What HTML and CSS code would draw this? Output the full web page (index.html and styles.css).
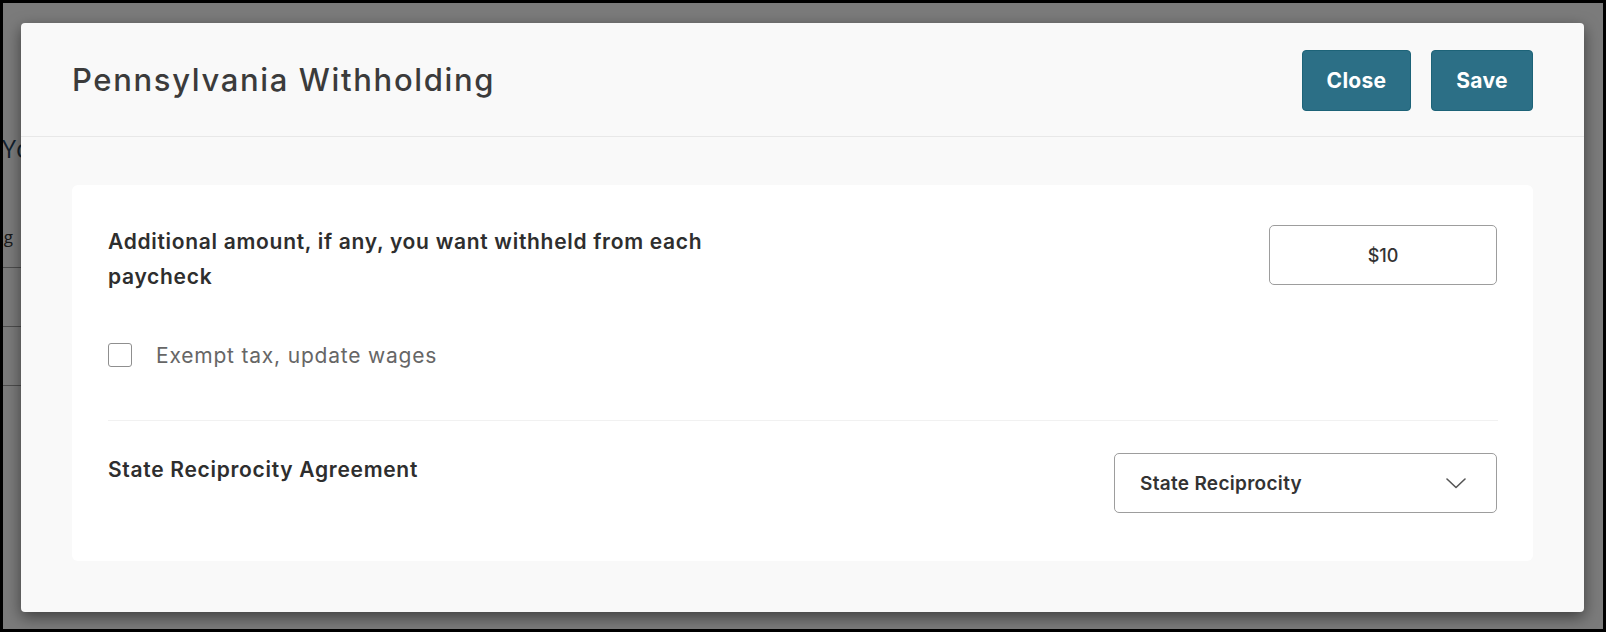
FILE: index.html
```html
<!DOCTYPE html>
<html lang="en">
<head>
<meta charset="utf-8">
<title>Pennsylvania Withholding</title>
<link rel="stylesheet" href="styles.css">
</head>
<body>
<div class="screen">
  <div class="page">
    <div class="page-top"></div>
    <h2 class="page-title">Your Withholdings</h2>
    <div class="page-table">
      <div class="page-row page-head"><span class="page-cell">Filing</span></div>
      <div class="page-row"><span class="page-cell">&nbsp;</span></div>
      <div class="page-row"><span class="page-cell">&nbsp;</span></div>
    </div>
  </div>
  <div class="backdrop"></div>
  <div class="modal" role="dialog" aria-labelledby="modal-title">
    <header class="modal-header">
      <h1 class="modal-title" id="modal-title">Pennsylvania Withholding</h1>
      <div class="modal-actions">
        <button class="btn btn-close" type="button">Close</button>
        <button class="btn btn-save" type="button">Save</button>
      </div>
    </header>
    <div class="modal-body">
      <section class="card">
        <div class="field-row">
          <label class="field-label field-label-wrap" for="amount">Additional amount, if any, you want withheld from each paycheck</label>
          <div class="text-input" id="amount">$10</div>
        </div>
        <label class="check-row">
          <span class="checkbox"></span>
          <span class="check-text">Exempt tax, update wages</span>
        </label>
        <hr class="divider">
        <div class="field-row">
          <span class="field-label">State Reciprocity Agreement</span>
          <div class="select">
            <span class="select-value">State Reciprocity</span>
            <svg class="chevron" width="20" height="11" viewBox="0 0 20 11" aria-hidden="true">
              <path d="M1 1 L10 9.5 L19 1" fill="none" stroke="#555" stroke-width="1.6" stroke-linecap="round" stroke-linejoin="round"/>
            </svg>
          </div>
        </div>
      </section>
    </div>
  </div>
</div>
</body>
</html>
```

FILE: styles.css
```css
* { box-sizing: border-box; }

html, body {
  margin: 0;
  padding: 0;
  background: #000;
}

body {
  font-family: "Inter", "Open Sans", "Liberation Sans", sans-serif;
  color: #333;
}

.screen {
  position: relative;
  width: 1606px;
  height: 632px;
  border: 3px solid #000;
  background: #f7f7f7;
  overflow: hidden;
}

/* underlying page, mostly hidden by modal */
.page {
  display: flex;
  flex-direction: column;
}

.page-top {
  height: 125px;
}

.page-title {
  margin: 0 0 0 -1px;
  font-family: "Open Sans", sans-serif;
  font-weight: 400;
  font-size: 25px;
  line-height: 40px;
  color: #27425a;
}

.page-table {
  margin-left: -97px;
  margin-top: 42px;
  width: 400px;
}

.page-row {
  height: 59px;
  border-bottom: 1px solid #9a9a9a;
  display: flex;
  align-items: flex-start;
}

.page-head {
  height: 58px;
}

.page-cell {
  width: 107px;
  text-align: right;
  font-family: "Open Sans", sans-serif;
  font-size: 17px;
  line-height: 22px;
  padding-top: 16px;
  color: #333;
}

.backdrop {
  position: absolute;
  inset: 0;
  background: rgba(0, 0, 0, 0.5);
}

/* modal */
.modal {
  position: absolute;
  left: 18px;
  top: 20px;
  width: 1563px;
  height: 589px;
  background: #f9f9f9;
  border-radius: 4px;
  box-shadow: 0 5px 15px rgba(0, 0, 0, 0.5);
  display: flex;
  flex-direction: column;
}

.modal-header {
  height: 114px;
  padding: 0 51px 0 51px;
  display: flex;
  align-items: center;
  justify-content: space-between;
  border-bottom: 1px solid #e8e8e8;
}

.modal-title {
  margin: 0;
  font-size: 31px;
  font-weight: 500;
  letter-spacing: 1.65px;
  color: #3b3b3b;
}

.modal-actions {
  display: flex;
  gap: 20px;
  padding-top: 1px;
}

.btn {
  height: 61px;
  border: 1px solid #1d6378;
  border-radius: 4px;
  background: #2c6f86;
  color: #fff;
  font-family: inherit;
  font-size: 21px;
  font-weight: 700;
  letter-spacing: 0.3px;
  cursor: pointer;
}

.btn-close { width: 109px; }
.btn-save { width: 102px; }

.modal-body {
  padding: 48px 51px 51px;
  flex: 1;
  display: flex;
}

.card {
  flex: 1;
  background: #fff;
  border-radius: 6px;
  padding: 40px 35px 48px 36px;
  display: flex;
  flex-direction: column;
}

.field-row {
  display: flex;
  justify-content: space-between;
  align-items: flex-start;
}

.field-label {
  font-size: 21px;
  font-weight: 600;
  letter-spacing: 0.7px;
  line-height: 35px;
  color: #2e2e2e;
  margin-top: -1px;
}

.field-label-wrap {
  width: 625px;
}

.text-input {
  width: 228px;
  height: 60px;
  border: 1px solid #9d9d9d;
  border-radius: 5px;
  display: flex;
  align-items: center;
  justify-content: center;
  font-size: 18px;
  font-weight: 500;
  color: #333;
  margin-right: 1px;
}

.check-row {
  display: flex;
  align-items: center;
  gap: 24px;
  margin-top: 48px;
  height: 26px;
}

.checkbox {
  width: 24px;
  height: 24px;
  border: 1.5px solid #8f8f8f;
  border-radius: 3px;
  background: #fff;
}

.check-text {
  font-size: 21px;
  font-weight: 400;
  letter-spacing: 0.8px;
  color: #666;
}

.divider {
  margin: 52px 0 32px;
  border: 0;
  border-top: 1px solid #f1f1f1;
  height: 0;
  width: 100%;
}

.select {
  width: 383px;
  height: 60px;
  border: 1px solid #9d9d9d;
  border-radius: 5px;
  display: flex;
  align-items: center;
  justify-content: space-between;
  padding: 0 30px 0 25px;
  margin-right: 1px;
}

.select-value {
  font-size: 19px;
  font-weight: 600;
  letter-spacing: 0.3px;
  color: #333;
}

.chevron {
  display: block;
}
```
